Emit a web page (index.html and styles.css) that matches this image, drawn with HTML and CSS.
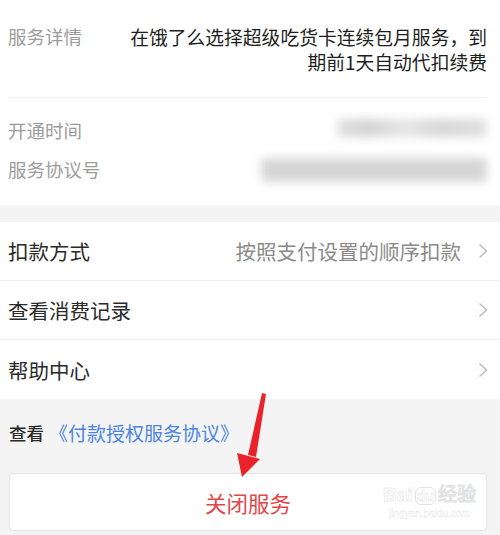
FILE: index.html
```html
<!DOCTYPE html>
<html lang="zh-CN">
<head>
  <meta charset="UTF-8" />
  <meta name="viewport" content="width=device-width, initial-scale=1" />
  <title>服务详情</title>
  <link rel="stylesheet" href="styles.css">
</head>
<body>
  <main class="page">
    <section class="detail">
      <div class="detail-top">
        <span class="label">服务详情</span>
        <p class="desc">在饿了么选择超级吃货卡连续包月服务，到期前1天自动代扣续费</p>
      </div>
      <div class="detail-meta">
        <div class="meta-row">
          <span class="label">开通时间</span>
          <span class="masked masked-time"></span>
        </div>
        <div class="meta-row">
          <span class="label">服务协议号</span>
          <span class="masked masked-no"></span>
        </div>
      </div>
    </section>

    <ul class="menu">
      <li class="menu-item">
        <span class="menu-title">扣款方式</span>
        <span class="menu-value">按照支付设置的顺序扣款</span>
        <svg class="chevron" viewBox="0 0 10 16"><path d="M1.5 1.5 L8.5 8 L1.5 14.5" /></svg>
      </li>
      <li class="menu-item">
        <span class="menu-title">查看消费记录</span>
        <svg class="chevron" viewBox="0 0 10 16"><path d="M1.5 1.5 L8.5 8 L1.5 14.5" /></svg>
      </li>
      <li class="menu-item">
        <span class="menu-title">帮助中心</span>
        <svg class="chevron" viewBox="0 0 10 16"><path d="M1.5 1.5 L8.5 8 L1.5 14.5" /></svg>
      </li>
    </ul>

    <section class="footer">
      <p class="agreement">查看<a href="#" class="agreement-link">《付款授权服务协议》</a></p>
      <button type="button" class="close-btn">关闭服务</button>
    </section>

    <!-- annotation arrow pointing at the close button -->
    <svg class="arrow" viewBox="0 0 500 535">
      <polygon points="262,393 266,394 256,457 248,455" />
      <polygon points="237,453 260,459 242,477" />
    </svg>

    <div class="watermark">
      <span class="wm-logo">Bai<span class="wm-du">du</span>经验</span>
      <span class="wm-url">jingyan.baidu.com</span>
    </div>
  </main>
</body>
</html>
```

FILE: styles.css
```css
* {
  margin: 0;
  padding: 0;
  box-sizing: border-box;
}
body {
  font-family: "Noto Sans CJK SC", "Noto Sans", sans-serif;
  background: #f4f4f4;
  color: #333;
  width: 500px;
  height: 535px;
  overflow: hidden;
}
.page {
  position: relative;
  height: 535px;
}

/* service detail block */
.detail {
  background: #fff;
  padding: 0 13px 0 8px;
}
.label {
  color: #9c9c9c;
  font-size: 18.5px;
  line-height: 25px;
  white-space: nowrap;
}
.detail-top {
  display: flex;
  justify-content: space-between;
  gap: 40px;
  padding: 24px 0 23px;
  border-bottom: 1px solid #f0f0f0;
}
.desc {
  flex: 1;
  text-align: right;
  color: #1e1e1e;
  font-size: 18.8px;
  line-height: 25px;
}
.detail-meta {
  display: flex;
  flex-direction: column;
  padding: 13px 0 16px;
}
.meta-row {
  display: flex;
  justify-content: space-between;
  align-items: center;
  height: 39px;
}
.masked {
  display: block;
  background: #dcdcdc;
  filter: blur(5px);
  border-radius: 4px;
}
.masked-time {
  width: 150px;
  height: 18px;
  background: linear-gradient(90deg, #e2e2e2 0%, #d2d2d2 20%, #e6e6e6 45%, #d6d6d6 70%, #e0e0e0 100%);
  margin-top: -6px;
}
.masked-no {
  width: 226px;
  height: 24px;
  background: #d6d6d6;
}

/* settings list */
.menu {
  list-style: none;
  background: #fff;
  margin-top: 17px;
}
.menu-item {
  display: flex;
  align-items: center;
  height: 59px;
  padding: 0 12px 0 8px;
  border-bottom: 1px solid #f0f0f0;
}
.menu-item:last-child {
  border-bottom: none;
}
.menu-title {
  flex: 1;
  font-size: 20.5px;
  color: #2a2a2a;
}
.menu-value {
  font-size: 20.5px;
  color: #8a8a8a;
  margin-right: 17px;
}
.chevron {
  width: 10px;
  height: 16px;
  fill: none;
  stroke: #b8b8b8;
  stroke-width: 1.4;
}

/* bottom area */
.footer {
  padding: 21px 13px 0 9px;
}
.agreement {
  display: flex;
  align-items: center;
  font-size: 17.5px;
  line-height: 26px;
  color: #2a2a2a;
  font-weight: 500;
}
.agreement-link {
  color: #4c84e0;
  text-decoration: none;
  font-size: 19px;
  font-weight: 400;
  margin-left: 5px;
}
.close-btn {
  display: block;
  width: 100%;
  height: 58px;
  margin-top: 27px;
  background: #fff;
  border: 1px solid #e4e4e4;
  border-radius: 3px;
  color: #e2464a;
  font-family: inherit;
  font-size: 21.5px;
}

.arrow {
  position: absolute;
  left: 0;
  top: 0;
  width: 500px;
  height: 535px;
  fill: #e9222b;
  pointer-events: none;
}

.watermark {
  position: absolute;
  left: 383px;
  top: 484px;
  display: flex;
  flex-direction: column;
  align-items: center;
  color: #fff;
  -webkit-text-stroke: 0.5px #e2e2e2;
  font-family: "Liberation Sans", sans-serif;
  pointer-events: none;
}
.wm-logo {
  font-size: 19px;
  font-weight: 700;
  line-height: 22px;
  white-space: nowrap;
}
.wm-du {
  font-size: 14px;
  border: 1px solid #e2e2e2;
  border-radius: 6px;
  padding: 0 1px;
  margin: 0 2px;
}
.wm-url {
  font-size: 10px;
  line-height: 14px;
  -webkit-text-stroke: 0.3px #e2e2e2;
}
```
